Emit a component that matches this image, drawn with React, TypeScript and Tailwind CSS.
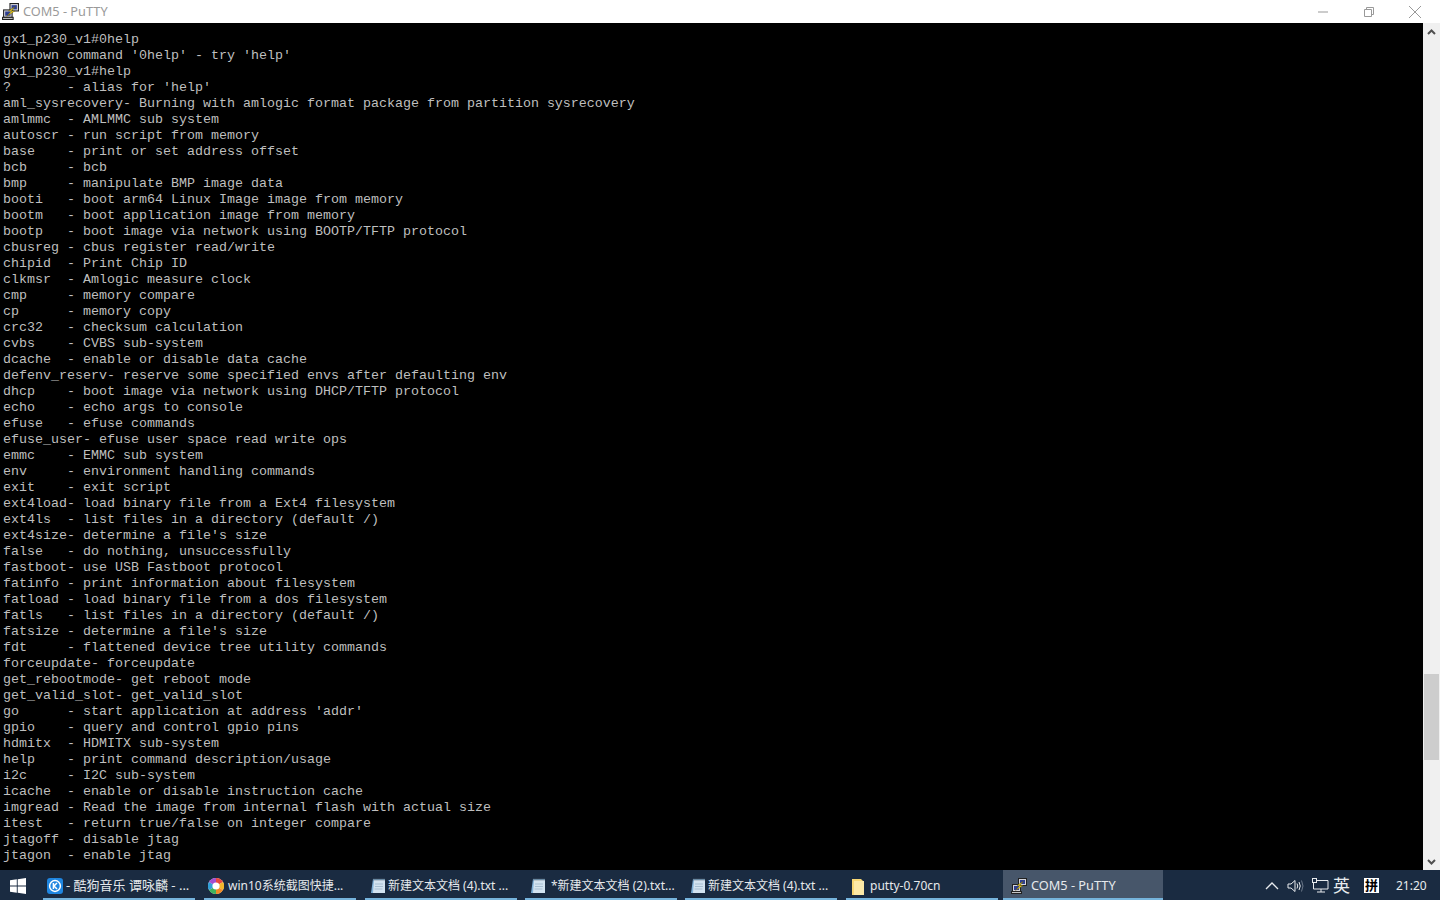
const lines = `gx1_p230_v1#0help
Unknown command '0help' - try 'help'
gx1_p230_v1#help
?       - alias for 'help'
aml_sysrecovery- Burning with amlogic format package from partition sysrecovery
amlmmc  - AMLMMC sub system
autoscr - run script from memory
base    - print or set address offset
bcb     - bcb
bmp     - manipulate BMP image data
booti   - boot arm64 Linux Image image from memory
bootm   - boot application image from memory
bootp   - boot image via network using BOOTP/TFTP protocol
cbusreg - cbus register read/write
chipid  - Print Chip ID
clkmsr  - Amlogic measure clock
cmp     - memory compare
cp      - memory copy
crc32   - checksum calculation
cvbs    - CVBS sub-system
dcache  - enable or disable data cache
defenv_reserv- reserve some specified envs after defaulting env
dhcp    - boot image via network using DHCP/TFTP protocol
echo    - echo args to console
efuse   - efuse commands
efuse_user- efuse user space read write ops
emmc    - EMMC sub system
env     - environment handling commands
exit    - exit script
ext4load- load binary file from a Ext4 filesystem
ext4ls  - list files in a directory (default /)
ext4size- determine a file's size
false   - do nothing, unsuccessfully
fastboot- use USB Fastboot protocol
fatinfo - print information about filesystem
fatload - load binary file from a dos filesystem
fatls   - list files in a directory (default /)
fatsize - determine a file's size
fdt     - flattened device tree utility commands
forceupdate- forceupdate
get_rebootmode- get reboot mode
get_valid_slot- get_valid_slot
go      - start application at address 'addr'
gpio    - query and control gpio pins
hdmitx  - HDMITX sub-system
help    - print command description/usage
i2c     - I2C sub-system
icache  - enable or disable instruction cache
imgread - Read the image from internal flash with actual size
itest   - return true/false on integer compare
jtagoff - disable jtag
jtagon  - enable jtag`;

const sans = 'font-["Noto_Sans","Noto_Sans_CJK_SC",sans-serif]';

function PuttyIcon({ size = 16 }: { size?: number }) {
  return (
    <svg width={size} height={size} viewBox="0 0 16 16" className="shrink-0">
      <rect x="7.500" y="0.500" width="8" height="7" fill="#d4d4dc" stroke="#222" strokeWidth="1" />
      <rect x="9" y="2" width="5" height="4" fill="#2f3f8f" />
      <rect x="1.500" y="6.500" width="8" height="7" fill="#d4d4dc" stroke="#222" strokeWidth="1" />
      <rect x="3" y="8" width="5" height="4" fill="#2f3f8f" />
      <rect x="0.500" y="13.500" width="10" height="2" fill="#c4c4c4" stroke="#222" strokeWidth="1" />
      <path d="M12 3.500 6 7.500h3L4.500 12.500 12 7.500H9z" fill="#f2d327" stroke="#5f5300" strokeWidth="0.400" />
    </svg>
  );
}

function KugouIcon() {
  return (
    <svg width="16" height="16" viewBox="0 0 16 16" className="shrink-0">
      <rect width="16" height="16" rx="3" fill="#1f86e0" />
      <circle cx="8" cy="8" r="5.400" fill="none" stroke="#fff" strokeWidth="1.500" />
      <path d="M6.400 5v6M10 5 7 8l3 3" fill="none" stroke="#fff" strokeWidth="1.500" />
    </svg>
  );
}

function ColorRingIcon() {
  return (
    <svg width="16" height="16" viewBox="0 0 16 16" className="shrink-0">
      <circle cx="8" cy="8" r="8" fill="#eee" />
      <path d="M8 8V0a8 8 0 0 1 7 4z" fill="#e8483f" />
      <path d="M8 8l7-4a8 8 0 0 1 0 8z" fill="#f3b72c" />
      <path d="M8 8l7 4a8 8 0 0 1-7 4z" fill="#f08a24" />
      <path d="M8 8v8a8 8 0 0 1-7-4z" fill="#3fb35c" />
      <path d="M8 8l-7 4a8 8 0 0 1 0-8z" fill="#2f9fd8" />
      <path d="M8 8L1 4a8 8 0 0 1 7-4z" fill="#a24fd0" />
      <circle cx="8" cy="8" r="3.600" fill="#fff" />
    </svg>
  );
}

function NoteIcon() {
  return (
    <svg width="14" height="16" viewBox="0 0 14 16" className="shrink-0">
      <path d="M2 1h12v14H0z" fill="#7fb0d8" />
      <path d="M3 2h11v13H2z" fill="#d3e3f0" />
      <path d="M2.500 1.500H14" stroke="#55626f" strokeWidth="2" strokeDasharray="1 1" />
      <path d="M4 6h8M4 8.500h8M3.500 11h8" stroke="#a7bed1" strokeWidth="1" />
    </svg>
  );
}

function FolderIcon() {
  return (
    <svg width="14" height="17" viewBox="0 0 14 17" className="shrink-0">
      <path d="M0 1h9l2 2v14H0z" fill="#f8d774" />
      <path d="M2 3h10v14H2z" fill="#fde9a6" />
    </svg>
  );
}

function Task({ icon, label, cls, active }: { icon: React.ReactNode; label: string; cls: string; active?: boolean }) {
  return (
    <div
      className={`flex items-center h-full shrink-0 pt-[4px] border-b-2 border-[#76b4dc] overflow-hidden whitespace-nowrap text-[#e6e9ec] ${cls} ${
        active ? "bg-[#47566a]" : ""
      }`}
    >
      {icon}
      <span>{label}</span>
    </div>
  );
}

export default function App() {
  return (
    <div className={`flex flex-col w-[1440px] h-[900px] overflow-hidden bg-black ${sans}`}>
      <div className="flex items-center h-[23px] bg-white shrink-0">
        <div className="pl-[2px] w-[23px]">
          <PuttyIcon size={17} />
        </div>
        <span className="flex-1 text-[12.750px] text-[#9a9a9a]">COM5 - PuTTY</span>
        <div className="flex items-center">
          <svg width="12" height="12" viewBox="0 0 12 12" className="mr-[34px]">
            <path d="M1 6h10" stroke="#999" strokeWidth="1" />
          </svg>
          <svg width="12" height="12" viewBox="0 0 12 12" className="mr-[33px]">
            <path d="M1.500 3.500h7v7h-7zM3.500 3.500v-2h7v7h-2" fill="none" stroke="#999" strokeWidth="1" />
          </svg>
          <svg width="14" height="14" viewBox="0 0 14 14" className="mr-[18px]">
            <path d="M1 1l12 12M13 1L1 13" stroke="#999" strokeWidth="1" />
          </svg>
        </div>
      </div>

      <div className="flex flex-1 min-h-0">
        <pre className="flex-1 m-0 pt-[9px] pl-[3px] overflow-hidden bg-black text-[#bfbfbf] text-[13.33px] leading-[16px] font-['Liberation_Mono',monospace]">
          {lines}
        </pre>
        <div className="flex flex-col w-[17px] shrink-0 bg-[#f0f0f0]">
          <div className="flex items-center justify-center h-[17px] shrink-0">
            <svg width="9" height="6" viewBox="0 0 9 6">
              <path d="M1 5l3.500-3.500L8 5" fill="none" stroke="#505050" strokeWidth="2" />
            </svg>
          </div>
          <div className="mt-[634px] mx-px h-[86px] bg-[#cdcdcd]" />
          <div className="flex-1" />
          <div className="flex items-center justify-center h-[17px] shrink-0">
            <svg width="9" height="6" viewBox="0 0 9 6">
              <path d="M1 1l3.500 3.500L8 1" fill="none" stroke="#505050" strokeWidth="2" />
            </svg>
          </div>
        </div>
      </div>

      <div className="flex items-center h-[30px] shrink-0 bg-[#1a2b41]">
        <div className="flex items-center w-[43px] pl-[10px] pt-[1px] shrink-0">
          <svg width="16" height="16" viewBox="0 0 16 16">
            <path d="M0 2.300 6.800 1.300V7.500H0zM7.700 1.200 16 0V7.500H7.700zM0 8.400H6.800V14.700L0 13.700zM7.700 8.400H16V16L7.700 14.800z" fill="#fff" />
          </svg>
        </div>
        <Task cls="w-[152px] mr-[9px] pl-[4px] gap-[3px] text-[13px]" icon={<KugouIcon />} label=" - 酷狗音乐 谭咏麟 - ..." />
        <Task cls="w-[152px] mr-[9px] pl-[4px] gap-[4px] text-[12px]" icon={<ColorRingIcon />} label="win10系统截图快捷..." />
        <Task cls="w-[152px] mr-[8px] pl-[6px] gap-[3px] text-[12px]" icon={<NoteIcon />} label="新建文本文档 (4).txt ..." />
        <Task cls="w-[152px] mr-[8px] pl-[6px] gap-[6px] text-[12px]" icon={<NoteIcon />} label="*新建文本文档 (2).txt..." />
        <Task cls="w-[152px] mr-[9px] pl-[6px] gap-[3px] text-[12px]" icon={<NoteIcon />} label="新建文本文档 (4).txt ..." />
        <Task cls="w-[152px] mr-[5px] pl-[6px] gap-[4px] text-[12px]" icon={<FolderIcon />} label="putty-0.70cn" />
        <Task active cls="w-[160px] pl-[8px] gap-[4px] text-[12.750px]" icon={<PuttyIcon />} label="COM5 - PuTTY" />

        <div className="flex items-center flex-1 pt-[1px] text-[#e8ebee]">
          <svg width="14" height="8" viewBox="0 0 14 8" className="ml-[102px]">
            <path d="M1 7l6-6 6 6" fill="none" stroke="#e8ebee" strokeWidth="1.300" />
          </svg>
          <svg width="17" height="14" viewBox="0 0 17 14" className="ml-[8px]">
            <path d="M1 5h3l4-3.500v11L4 9H1z" fill="none" stroke="#e8ebee" strokeWidth="1" />
            <path d="M10 4.500q1.500 2.500 0 5M12 3q2.500 4 0 8" fill="none" stroke="#e8ebee" strokeWidth="1" />
            <path d="M14.500 1.500q3 5.500 0 11" fill="none" stroke="#6b7889" strokeWidth="1" />
          </svg>
          <svg width="17" height="15" viewBox="0 0 17 15" className="ml-[8px]">
            <path d="M4.500 2.500H16v8.500H1.500V4.500M9 11v3M5 14h8" fill="none" stroke="#e8ebee" strokeWidth="1" />
            <rect x="0.500" y="0.500" width="4" height="4" fill="none" stroke="#e8ebee" strokeWidth="1" />
          </svg>
          <span className="ml-[4px] w-[18px] text-[17px] leading-none">英</span>
          <span className="ml-[13px] flex items-center justify-center w-[15px] h-[15px] bg-white text-black text-[13px] font-bold leading-none">拼</span>
          <span className="ml-[17px] text-[12px]">21:20</span>
        </div>
      </div>
    </div>
  );
}
